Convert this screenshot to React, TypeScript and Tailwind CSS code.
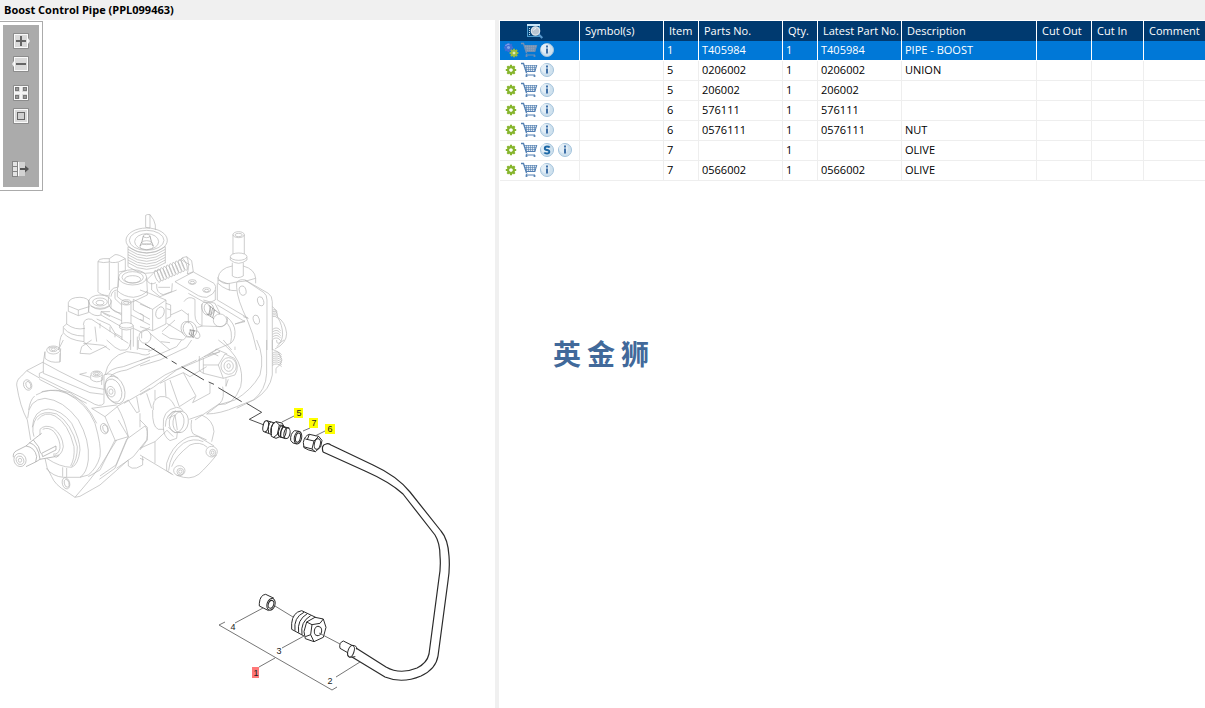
import type { ReactNode } from 'react';

interface Part {
  item: string;
  partNo: string;
  qty: string;
  latest: string;
  description: string;
  superseded?: boolean;
  selected?: boolean;
}

const parts: Part[] = [
  { item: '1', partNo: 'T405984', qty: '1', latest: 'T405984', description: 'PIPE - BOOST', selected: true },
  { item: '5', partNo: '0206002', qty: '1', latest: '0206002', description: 'UNION' },
  { item: '5', partNo: '206002', qty: '1', latest: '206002', description: '' },
  { item: '6', partNo: '576111', qty: '1', latest: '576111', description: '' },
  { item: '6', partNo: '0576111', qty: '1', latest: '0576111', description: 'NUT' },
  { item: '7', partNo: '', qty: '1', latest: '', description: 'OLIVE', superseded: true },
  { item: '7', partNo: '0566002', qty: '1', latest: '0566002', description: 'OLIVE' },
];

const headings = ['Symbol(s)', 'Item', 'Parts No.', 'Qty.', 'Latest Part No.', 'Description', 'Cut Out', 'Cut In', 'Comment'];

/* ---------- toolbar ---------- */

function ToolButton({ label, className = '', children }: { label: string; className?: string; children: ReactNode }) {
  return (
    <button type="button" aria-label={label} title={label} className={`block h-4 w-[18px] ${className}`}>
      <svg viewBox="0 0 18 16" className="block h-4 w-[18px]">
        {children}
      </svg>
    </button>
  );
}

function Key() {
  return (
    <>
      <rect x="1" y="0" width="16" height="16" rx="1" fill="#8c8c8c" />
      <rect x="2" y="1" width="14" height="14" fill="#fafafa" />
      <rect x="3" y="2" width="12" height="12" fill="#dadada" />
    </>
  );
}

function Toolbar() {
  return (
    <div className="absolute left-0 top-px border-y border-r border-[#ababab] bg-white p-[3px]">
      <div className="flex w-9 flex-col items-center bg-[#ababab] pb-[10px] pt-2">
        <ToolButton label="Zoom in">
          <Key />
          <path d="M16 5l2 3-2 3z" fill="#eee" />
          <path d="M9 3v10M4 8h10" stroke="#666" strokeWidth="2" />
        </ToolButton>
        <ToolButton label="Zoom out" className="mt-[7px]">
          <Key />
          <path d="M2 5L0 8l2 3z" fill="#eee" />
          <path d="M4 8h10" stroke="#666" strokeWidth="2" />
        </ToolButton>
        <ToolButton label="Fit all" className="mt-[13px]">
          <Key />
          <path d="M9 1v14M2 8h14" stroke="#f4f4f4" strokeWidth="2" />
          {[3, 11].map((x) =>
            [2, 10].map((y) => (
              <rect key={`${x}-${y}`} x={x + 0.5} y={y + 0.5} width="3" height="3" fill="#999" stroke="#777" />
            )),
          )}
        </ToolButton>
        <ToolButton label="Actual size" className="mt-[7px]">
          <Key />
          <rect x="5.5" y="4.5" width="7" height="7" fill="#d0d0d0" stroke="#666" />
        </ToolButton>
        <ToolButton label="Hide panel" className="mt-[37px]">
          <rect x="0.5" y="0.5" width="5" height="15" fill="#e4e4e4" stroke="#858585" />
          <path d="M1 5.5h4M1 10.5h4" stroke="#858585" />
          <rect x="6" y="1" width="7" height="14" fill="#d2d2d2" />
          <path d="M6.5 1v14" stroke="#fff" />
          <path d="M8 8h6" stroke="#555" strokeWidth="2" />
          <path d="M13 4.500L17 8 13 11.500z" fill="#555" />
        </ToolButton>
      </div>
    </div>
  );
}

/* ---------- row icons ---------- */

function Gear({ cx, cy, r, color }: { cx: number; cy: number; r: number; color: string }) {
  return (
    <g transform={`translate(${cx} ${cy}) scale(${r / 5})`} stroke={color} fill="none">
      <path d="M0-5.200V-2.500M0 5.200V2.500M-5.200 0H-2.500M5.200 0H2.500M-3.700-3.700l2 2M3.700 3.700l-2-2M3.700-3.700l-2 2M-3.700 3.700l2-2" strokeWidth="2.200" />
      <circle r="2.900" strokeWidth="2.200" />
    </g>
  );
}

function GearIcon({ linked }: { linked?: boolean }) {
  return (
    <svg viewBox="0 1 18 16" className="h-4 w-[18px]">
      {linked ? (
        <>
          <circle cx="6.500" cy="6.500" r="2" fill="#7fa6e8" />
          <Gear cx={6.5} cy={6.5} r={4.4} color="#3f6fd6" />
          <path d="M3.500 5a3.500 3.500 0 0 1 4-1.800" stroke="#8fb0f2" fill="none" />
          <circle cx="12" cy="12" r="2" fill="#dcebb4" />
          <Gear cx={12} cy={12} r={4.2} color="#9cbf3c" />
        </>
      ) : (
        <Gear cx={9} cy={9} r={5} color="#86b52c" />
      )}
    </svg>
  );
}

function CartIcon({ muted }: { muted?: boolean }) {
  const frame = muted ? '#6f8fb5' : '#527fb2';
  return (
    <svg viewBox="0 1 18 16" className="h-4 w-[18px]" fill="none" stroke={frame}>
      <path d="M4 4h13l-2 6H6z" fill={muted ? '#8ba0b8' : '#e2e9f1'} stroke="none" />
      <path d="M1 2.500h2.500l3 9.500" strokeWidth="1.300" />
      <path d="M4 4.500h13M5 6.500h11M5.500 8.500h10M6.500 4v6M8.500 4v6M10.500 4v6M12.500 4v6M14.500 4v6" strokeWidth="0.600" />
      <path d="M6 10.500h9M16.800 4l-2 7M7 12.500l-1 1.500h9" />
      <circle cx="6.500" cy="15" r="1.100" fill={frame} stroke="none" />
      <circle cx="14.500" cy="15" r="1.100" fill={frame} stroke="none" />
    </svg>
  );
}

function BadgeIcon({ letter }: { letter: 'i' | 'S' }) {
  return (
    <svg viewBox="0 1 18 16" className="h-4 w-[18px]">
      <circle cx="9" cy="9" r="6.500" fill="#cfe1ee" stroke="#a3c3dc" />
      <circle cx="7.500" cy="7.500" r="4.500" fill="#e3eef6" />
      {letter === 'i' ? (
        <path d="M8 4.500h2v2H8zM8 7.500h2v5H8z" fill="#3f70a8" />
      ) : (
        <path d="M11.700 6.500Q11 5.500 9 5.500 6.800 5.500 6.800 7.200T9 9 11.300 10.800 9 12.500Q7 12.500 6.300 11.500" stroke="#1c68a6" strokeWidth="1.900" fill="none" />
      )}
    </svg>
  );
}

function IconButton({ label, children }: { label: string; children: ReactNode }) {
  return (
    <button type="button" aria-label={label} title={label} className="h-4 w-[18px]">
      {children}
    </button>
  );
}

function SearchIcon() {
  return (
    <svg viewBox="0 0 16 16" className="h-4 w-4">
      <rect x="0.500" y="1.500" width="12" height="12" fill="#07477c" stroke="#4b9bce" />
      <path d="M0 2h13" stroke="#c8e6f8" strokeWidth="2" />
      <path d="M2.500 5v8" stroke="#c8e6f8" strokeDasharray="1 1" />
      <circle cx="8.500" cy="8" r="4.200" fill="#b9c6d2" stroke="#dde5ec" strokeWidth="1.200" />
      <path d="M6.500 7.500a2.500 2.500 0 0 1 2.500-2" stroke="#eef3f7" fill="none" />
      <path d="M11.800 11.500l3.500 3.500" stroke="#5b9bd0" strokeWidth="2" />
    </svg>
  );
}

/* ---------- drawing ---------- */

// [cx, cy, rx, ry, rotation]
type Ring = [number, number, number, number, number?];

function Rings({ list }: { list: Ring[] }) {
  return (
    <>
      {list.map(([cx, cy, rx, ry, a = 0], i) => (
        <ellipse key={i} cx={cx} cy={cy} rx={rx} ry={ry} transform={`rotate(${a} ${cx} ${cy})`} />
      ))}
    </>
  );
}

function Pump() {
  return (
    <g transform="translate(0 200) scale(0.3333)" fill="none" stroke="#b4b4b4" strokeWidth="2" strokeLinejoin="round">
      {/* upper left: sender, plug, stud */}
      <path d="M294 185V275Q300 285 325 287M294 185Q296 176 310 176H328V186Q310 190 294 185M328 176L345 164Q355 162 376 176V212L357 216M328 185Q335 190 355 186L376 176M355 188V262M328 187V270" />
      <path d="M356 232L352 272Q370 290 400 292Q430 288 442 272L440 232M325 300Q328 262 352 262M325 300Q322 320 345 335L365 340M333 290Q335 272 350 270M345 275V296L365 315M352 272V290Q375 312 400 305L442 285V272" />
      <path d="M266 300V335Q285 352 303 345V335H330M333 300V325L365 345M272 318Q300 338 330 318" />
      <path d="M205 308Q210 292 240 292Q265 293 268 308L265 338L235 347L205 334ZM205 318L235 330L268 320M235 330V347M200 335V372Q225 392 255 385M200 372L190 380V398Q205 420 252 425M190 400Q180 405 178 440L175 450M192 385Q210 408 252 408" />
      <path d="M365 307V372M393 307V372M359 376V384Q379 396 400 384V376M366 388V420M392 388V450M400 298L450 325M400 298V330L450 358M393 345L450 375M400 385L425 397L450 382M400 385V440M412 410V450M425 397V415" />
      <path d="M250 375Q252 352 275 358L385 430M252 375V425L275 450M285 380L290 425M303 335L365 362M303 345L360 378M290 357L330 375L345 400L366 412M310 340L330 350M250 430L310 436L330 450M300 370V385M330 380V395M345 400V412" />
      <Rings list={[[398, 232, 42, 23], [398, 232, 32, 17], [398, 238, 24, 11], [300, 305, 34, 20], [300, 306, 22, 12], [300, 308, 12, 7], [379, 307, 14, 8], [379, 308, 8, 5], [379, 376, 20, 8]]} />

      {/* upper right: pulley, spring, bracket and flange */}
      <g transform="translate(420 0)">
        <path d="M17 82V46Q22 42 30 44Q44 60 46 75V90M30 44V84M17 82L30 84" />
        <Rings list={[[20, 121, 62, 37], [20, 121, 52, 30], [20, 125, 36, 24], [20, 140, 20, 9], [20, 108, 10, 5], [20, 128, 14, 6]]} />
        <path d="M0 138L6 124L10 108M30 108L34 124L40 138" stroke="#8a8a8a" />
        {[140, 148, 156, 164, 172, 180, 188].map((y) => (
          <path key={y} d={`M-36 ${y}Q20 ${y + 40} 76 ${y}`} />
        ))}
        <path d="M-36 140V200M76 140V190M-36 200Q20 236 60 208" />
        {[0, 1, 2, 3, 4, 5, 6, 7, 8, 9].map((i) => (
          <ellipse key={i} cx={52 + i * 9} cy={229 - i * 4} rx="6" ry="19" transform={`rotate(-22 ${52 + i * 9} ${229 - i * 4})`} />
        ))}
        <path d="M118 182Q125 170 140 170L155 182L160 215L142 222M125 180L150 195M20 240L40 220M20 240Q30 258 48 248M140 170Q150 190 142 222" />
        <path d="M105 245L160 216L222 250Q230 258 226 270Q222 283 200 292Q185 292 175 287L105 245ZM226 270V300Q205 312 190 305L145 280M50 252Q48 280 70 284L95 275L97 250M55 262L90 262M35 248V270L60 290L110 270" />
        <Rings list={[[157, 246, 12, 7], [157, 248, 7, 4], [200, 270, 12, 7], [200, 272, 7, 4]]} />
        <Rings list={[[296, 104, 17, 9], [296, 105, 11, 5], [296, 170, 25, 11]]} />
        <path d="M279 104V162M313 104V162M271 172V180Q296 200 321 180V172M277 188V228Q292 238 310 228V188M234 234Q238 205 277 198M310 198Q345 208 347 235V250M234 232V250Q260 274 290 272M234 234Q245 255 270 250L290 246Q320 245 347 235M232 250V300M268 250V272M234 240L265 252" />
        <path d="M290 262V248Q298 236 315 240L385 280Q397 288 397 305V450M315 240L372 278Q381 285 381 300V450M290 262Q292 300 322 360Q340 400 350 450" />
        <Rings list={[[308, 272, 10, 14, -15], [362, 304, 9, 14, -15], [349, 359, 9, 14, -15]]} />
        <path d="M397 320Q412 330 413 352Q436 365 440 400Q440 430 405 447M413 352Q428 375 428 405Q425 430 410 440M232 300L325 355M232 315L315 365L285 372M325 355L310 350" />
        {[0, 5, 10, 15, 20].map((d) => (
          <path key={d} d={`M398 ${330 + d}q8-4 14 4M398 ${388 + d * 1.5}q14-10 24 4`} />
        ))}
        <Rings list={[[240, 361, 20, 19], [207, 326, 14, 18, -20], [198, 326, 12, 20, -20], [150, 388, 20, 24, -20], [142, 388, 18, 24, -20], [170, 404, 9, 12, -20]]} />
        <path d="M207 316L240 342M200 342L222 356M212 320L206 345M218 324L212 349M224 330L218 353M148 390L165 392M146 400L162 414M152 388L148 404M157 389L153 408M162 391L158 412" stroke="#8a8a8a" />
        <path d="M186 312V375M0 312L38 328L78 300L28 280L0 270M38 328V392L78 372V300M38 392L0 380M78 310L92 315V350L80 356M80 326L92 330M0 340L10 345V362L0 358" />
        <Rings list={[[60, 338, 12, 18, 20], [15, 410, 18, 20]]} />
        <path d="M92 345L125 330L145 345M80 370L130 400M145 340V370M132 305Q145 285 165 298V345Q165 370 188 378L245 380M188 378L172 382M245 380Q270 372 260 350Q285 372 285 395Q286 420 272 430L225 450M262 370Q280 392 272 430M66 400L90 415L130 420L140 410M66 395L105 360M30 400L90 450M190 300L225 310L240 340M285 440V450M285 372L315 362" />
      </g>

      {/* lower left: front flange and drive shaft */}
      <g transform="translate(0 420)">
        <path d="M50 135Q50 118 65 108L80 92L130 66M50 135Q60 200 82 240L92 300M80 92L120 115M83 235Q85 178 135 175Q190 180 235 240Q270 300 265 360Q260 400 240 412H190Q160 410 138 385M108 165Q150 140 200 160Q260 190 285 250Q305 320 300 350Q290 385 265 405L240 412M104 168Q90 180 86 210M125 155Q165 145 210 158Q262 190 290 250" />
        <path d="M97 262Q100 210 145 207Q185 210 215 250Q240 300 240 330Q235 375 215 382Q180 382 140 355M102 290Q92 260 110 232Q130 210 170 222Q215 250 232 320Q232 360 215 380M112 240Q135 212 165 228Q205 250 222 320Q225 355 212 378" />
        <path d="M120 285V268Q135 252 160 264Q188 285 190 320Q185 350 165 346M128 268Q145 260 162 275Q182 300 180 325Q175 345 160 342" />
        <path d="M40 352Q38 338 50 332L78 318Q105 322 110 350L107 366L78 380M78 318Q98 300 125 280M88 308Q115 315 120 358L107 366M120 358L165 350M125 340L168 318V330L128 350ZM100 300Q120 320 122 340M160 345L168 352L178 346" stroke="#9c9c9c" />
        <Rings list={[[83, 135, 12, 16, -20], [85, 135, 7, 11, -20], [60, 360, 18, 20, -20], [60, 361, 11, 13, -20], [60, 361, 5, 6], [198, 430, 11, 17, -15], [200, 430, 7, 12, -15], [313, 266, 11, 16, -20], [316, 266, 7, 12, -20]]} />
        <path d="M135 355Q138 385 155 410Q165 435 200 455L225 472L240 469L300 435L385 360M225 472L265 425L300 380L350 300M188 382V410M200 384V411M275 205L315 230L345 300L300 390L265 410M315 230L352 200Q375 240 385 290L345 302M385 290L345 385L298 418M435 258L380 298L348 375L300 408M435 258Q446 270 440 300L400 350L350 385M385 362V378Q395 388 410 384L428 375V350M355 240L385 290" />
        <path d="M135 35L130 66V100L270 158L310 163M130 68L180 95L270 140L312 148M118 110V100L130 95M118 110L270 185Q300 205 312 190V105M118 118L260 190M135 35V55Q150 70 180 66L182 25M180 66V40M275 205L350 195" />
        <Rings list={[[160, 30, 20, 12], [160, 28, 12, 7], [160, 28, 6, 4], [290, 102, 17, 9], [290, 101, 11, 6], [290, 101, 6, 3], [345, 150, 28, 43, -20], [340, 152, 24, 36, -20], [333, 155, 12, 16, -15], [333, 155, 6, 8]]} />
        <path d="M144 25L150 20M272 105V118Q290 132 308 120V105M240 103L270 112M238 103L260 98M312 105Q330 95 355 115M315 105Q325 50 380 35L415 40Q440 50 450 40M318 105Q330 85 370 80L420 62L450 50M330 110Q345 95 380 90L450 60M372 190L450 145M350 200L385 180M385 180L410 218L418 215L410 170M420 220V262M245 20L240 40L270 42L320 18M245 20L275 0M320 0L345 22Q360 35 378 30Q390 25 392 0M415 0V25L450 30M190 0L175 30M305 110V135" />
      </g>

      {/* lower right: housing, elbow and end cover */}
      <g transform="translate(420 420)">
        <path d="M0 165L40 142L110 90L240 35M0 155L75 105L170 60M60 130L90 115L130 98L168 168L158 188L210 160V130M90 120L118 200L165 170M130 98L150 110L200 80M20 160L35 205M45 150V180M75 125L78 170M0 62L60 42L110 20L125 0M0 78L60 60L140 22L155 0M25 35L45 25M62 5L90 8" />
        <path d="M175 60L230 28L262 42M190 55V100L250 115L285 105Q300 80 283 55L255 42L235 75L250 115M190 75H235M178 48V92L190 100M192 50L240 35M205 45L232 28M215 38L235 48M258 115V140M265 118L258 138" />
        <Rings list={[[266, 78, 23, 25], [266, 78, 14, 16], [266, 78, 5, 7], [122, 246, 23, 32, 8], [110, 246, 22, 32, 8], [215, 335, 17, 16], [218, 338, 9, 10], [218, 338, 4, 5], [118, 392, 17, 15], [121, 395, 10, 10], [121, 395, 5, 5]]} />
        <path d="M235 0Q320 60 302 140Q280 200 235 193M250 0L275 30M350 0Q375 50 360 105Q335 150 285 180L235 195L200 222Q240 222 290 200L340 180Q378 150 380 100V0M397 0V105Q390 150 345 178L290 205M165 240L240 190Q255 175 248 140" />
        {[0, 6, 12, 18, 24, 30, 36].map((d) => (
          <path key={d} d={`M397 ${40 + d}q15-10 28 4`} />
        ))}
        <path d="M397 28L415 36L426 60Q424 75 408 85V100M410 0Q408 20 432 0" />
        <path d="M40 210Q35 180 60 170Q90 165 105 200M38 210Q36 260 55 268L72 268M70 260Q65 210 110 202Q125 202 130 214M76 260Q76 222 108 212M70 260Q70 290 90 302L110 295L112 278M85 230L98 215L125 213M85 262L105 278L122 277M85 235L105 225L112 270M80 270L100 290" />
        <path d="M148 238L185 225Q220 240 222 275L215 305M155 240Q150 270 160 282L200 300M80 370Q95 320 130 300Q150 285 175 290L222 318M86 392Q90 340 130 310Q160 292 190 305M95 380Q105 350 150 315Q180 302 202 322M230 345Q210 370 190 390Q165 420 130 412L110 406M80 370V392L100 405M0 345L95 402M0 325L45 305L80 272M45 305V370M0 240L22 262V300L0 330M0 355L12 360" />
      </g>
    </g>
  );
}

function BoostPipe() {
  return (
    <g fill="none" stroke="#2b2b2b" strokeLinejoin="round">
      <g transform="translate(140 340) scale(0.3333)" strokeWidth="2.500">
        <path d="M15 12L82 55M95 63L110 72M125 80L192 120M206 126L222 133M235 143L305 185M320 190L365 217L328 238L372 255" />
      </g>

      {/* union, olive and nut */}
      <g transform="translate(240 395) scale(0.3333)" strokeWidth="3">
        <path d="M80 77L104 84M74 111L96 119M92 80Q82 92 86 114M100 84Q92 96 94 116" />
        <Rings list={[[77, 94, 8, 17, 12]]} />
        <path d="M92 106Q94 86 108 80L126 84L134 98M92 106L94 124L108 130L122 124M108 80L118 90L112 118L100 128M118 90L132 92M112 118L122 126M122 92Q112 110 116 124M130 94Q120 110 122 127M124 94L148 99M118 125L136 131" />
        <Rings list={[[141, 115, 9, 16, 12], [130, 112, 8, 16, 12], [174, 128, 11, 19, 12], [174, 128, 7, 14, 12]]} />
        <path d="M178 109L164 107Q150 116 152 136Q156 146 170 147" />
        <path d="M190 142Q194 122 208 118L236 124M190 142L192 158L206 165L226 170M196 132L222 138M190 155L216 162M208 118L202 134M236 124L222 138L216 162L226 170L242 156L246 136Z" />
        <Rings list={[[232, 147, 9, 16, 12]]} />
      </g>

      {/* tube */}
      <g strokeWidth="1.200">
        <path d="M323 452Q321 445 326 444Q328 443 331 445L373 465Q397 476 410 492L441 531Q448 539 449 556Q450 569 448 581L438 656Q436 669 421 676Q402 684 385 677L352 657" />
        <path d="M323 452L365 471Q390 482 403 494L435 535Q440 543 440 556Q441 567 439 578L429 654Q427 663 417 668Q400 675 386 667L356 648" />
      </g>

      {/* lower fittings */}
      <g transform="translate(200 540) scale(0.3333)" strokeWidth="3">
        <path d="M420 325Q416 308 430 303L456 316M420 325L443 338M456 316Q472 316 470 328M443 338Q442 352 452 352L466 350" />
        <Rings list={[[453, 334, 9, 18, 18]]} />
        <path d="M178 190Q180 165 197 163L222 175M178 190V198L206 212" />
        <Rings list={[[213, 193, 12, 18, 18], [213, 193, 8, 12, 18]]} />
        <path d="M275 250Q278 217 305 212L347 232M275 250V268L312 288M285 272Q280 232 312 217M296 278Q290 240 322 221M306 284Q300 246 332 227" />
        <path d="M312 275L320 246L345 232L370 237L378 262L370 292L342 305L316 296ZM320 246L336 254L332 284L342 305M336 254L360 250L370 237M332 284L316 290" />
        <Rings list={[[354, 273, 11, 14, 10]]} />
      </g>
    </g>
  );
}

function Callouts() {
  return (
    <>
      <g fill="none" stroke="#666" strokeWidth="0.900">
        <path d="M282 422L294 416M303 431L310 428M315 436L325 431" />
        <path d="M275 606L293 617M319 633L340 644M263 608L235 623M304 636L282 648M360 662L336 677M225 622L219 625L332 690L337 687M275 658L259 667" />
      </g>
      <g fill="#ffff00">
        <rect x="294" y="408" width="9" height="10" />
        <rect x="309" y="418" width="9" height="10" />
        <rect x="325" y="424" width="10" height="10" />
      </g>
      <rect x="252" y="667" width="7" height="11" fill="#ff7878" />
      <g fontFamily="'Liberation Sans', Arial, sans-serif" fontSize="9" fill="#222" textAnchor="middle">
        <text x="299" y="416">5</text>
        <text x="314" y="426">7</text>
        <text x="330" y="432">6</text>
        <text x="256" y="676">1</text>
        <text x="233" y="630">4</text>
        <text x="279" y="654">3</text>
        <text x="330" y="684">2</text>
      </g>
    </>
  );
}

function Illustration() {
  return (
    <svg viewBox="0 20 495 688" className="block w-full" role="img" aria-label="Boost control pipe">
      <Pump />
      <BoostPipe />
      <Callouts />
    </svg>
  );
}

/* ---------- parts list ---------- */

function PartsTable() {
  return (
    <table className="w-full table-fixed border-separate border-spacing-0 text-left text-[11px] leading-4">
      <colgroup>
        <col className="w-20" />
        <col className="w-[84px]" />
        <col className="w-[35px]" />
        <col className="w-[84px]" />
        <col className="w-[35px]" />
        <col className="w-[84px]" />
        <col className="w-[135px]" />
        <col className="w-[55px]" />
        <col className="w-[52px]" />
        <col />
      </colgroup>
      <thead>
        <tr className="h-5 bg-[#003a70] text-white">
          <th className="border-r border-white p-0 pl-[27px]">
            <button type="button" aria-label="Search parts" className="block h-4 w-4">
              <SearchIcon />
            </button>
          </th>
          {headings.map((heading) => (
            <th key={heading} className="whitespace-nowrap border-r border-white p-0 pl-[5px] font-normal last:border-r-0">
              {heading}
            </th>
          ))}
        </tr>
      </thead>
      <tbody>
        {parts.map((part, i) => {
          const line = part.selected ? 'border-white' : 'border-[#eeeeee]';
          const cell = `border-b border-r p-0 pb-0.5 pl-[3px] whitespace-nowrap last:border-r-0 ${line}`;
          return (
            <tr key={i} className={`h-5 ${part.selected ? 'bg-[#0078d7] text-white' : 'text-black'}`}>
              <td className={`border-b border-r p-0 pb-0.5 pl-0.5 ${line}`}>
                <div className="flex items-center">
                  <IconButton label="Part details">
                    <GearIcon linked={part.selected} />
                  </IconButton>
                  <IconButton label="Add to cart">
                    <CartIcon muted={part.selected} />
                  </IconButton>
                  {part.superseded && (
                    <IconButton label="Supersession">
                      <BadgeIcon letter="S" />
                    </IconButton>
                  )}
                  <IconButton label="Information">
                    <BadgeIcon letter="i" />
                  </IconButton>
                </div>
              </td>
              <td className={cell} />
              <td className={cell}>{part.item}</td>
              <td className={cell}>{part.partNo}</td>
              <td className={cell}>{part.qty}</td>
              <td className={cell}>{part.latest}</td>
              <td className={cell}>{part.description}</td>
              <td className={cell} />
              <td className={cell} />
              <td className={cell} />
            </tr>
          );
        })}
      </tbody>
    </table>
  );
}

export default function App() {
  return (
    <div className="flex min-h-screen flex-col bg-white font-['Open_Sans','Noto_Sans',sans-serif] text-black">
      <header className="h-5 bg-[#f0f0f0] px-1">
        <h1 className="text-[11px] font-bold leading-5">Boost Control Pipe (PPL099463)</h1>
      </header>
      <main className="flex flex-1">
        <section className="relative w-[495px] shrink-0">
          <Toolbar />
          <Illustration />
        </section>
        <div className="w-1 shrink-0 bg-[#f0f0f0]" />
        <section className="min-w-0 flex-1 pl-px pt-px">
          <PartsTable />
          <div className="mt-[152px] flex gap-[6px] pl-[53px] font-['Noto_Sans_CJK_SC',sans-serif] text-[28px] font-bold leading-10 text-[#41699a]">
            <span>英</span>
            <span>金</span>
            <span>狮</span>
          </div>
        </section>
      </main>
    </div>
  );
}
